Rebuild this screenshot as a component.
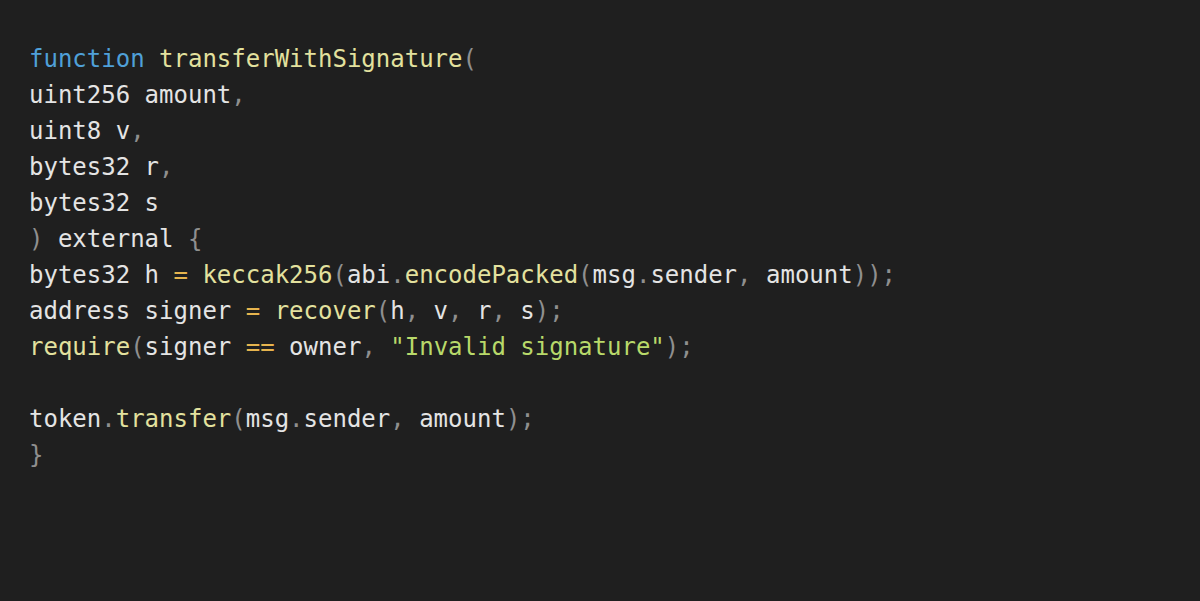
import React from "react";

const C = {
  kw: "text-[#4fa0d8]",
  fn: "text-[#e3e19e]",
  tx: "text-[#e4e4e4]",
  pn: "text-[#8f8f8f]",
  op: "text-[#e6b44e]",
  st: "text-[#b8d96a]",
};

const lines = [
  [["kw", "function"], ["tx", " "], ["fn", "transferWithSignature"], ["pn", "("]],
  [["tx", "uint256 amount"], ["pn", ","]],
  [["tx", "uint8 v"], ["pn", ","]],
  [["tx", "bytes32 r"], ["pn", ","]],
  [["tx", "bytes32 s"]],
  [["pn", ")"], ["tx", " external "], ["pn", "{"]],
  [
    ["tx", "bytes32 h "], ["op", "="], ["tx", " "], ["fn", "keccak256"], ["pn", "("],
    ["tx", "abi"], ["pn", "."], ["fn", "encodePacked"], ["pn", "("], ["tx", "msg"], ["pn", "."],
    ["tx", "sender"], ["pn", ","], ["tx", " amount"], ["pn", "));"],
  ],
  [
    ["tx", "address signer "], ["op", "="], ["tx", " "], ["fn", "recover"], ["pn", "("],
    ["tx", "h"], ["pn", ","], ["tx", " v"], ["pn", ","], ["tx", " r"], ["pn", ","], ["tx", " s"], ["pn", ");"],
  ],
  [
    ["fn", "require"], ["pn", "("], ["tx", "signer "], ["op", "=="], ["tx", " owner"], ["pn", ","],
    ["tx", " "], ["st", "\"Invalid signature\""], ["pn", ");"],
  ],
  [],
  [
    ["tx", "token"], ["pn", "."], ["fn", "transfer"], ["pn", "("], ["tx", "msg"], ["pn", "."],
    ["tx", "sender"], ["pn", ","], ["tx", " amount"], ["pn", ");"],
  ],
  [["pn", "}"]],
];

export default function App() {
  return (
    <div className="w-[1200px] h-[601px] bg-[#1f1f1f] overflow-hidden pt-[41px] pl-[29px]">
      <pre className="font-['DejaVu_Sans_Mono','Liberation_Mono',monospace] text-[24px] leading-[36px]">
        {lines.map((line, i) => (
          <div key={i} className="h-[36px] whitespace-pre">
            {line.map(([k, t], j) => (
              <span key={j} className={C[k]}>
                {t}
              </span>
            ))}
          </div>
        ))}
      </pre>
    </div>
  );
}
